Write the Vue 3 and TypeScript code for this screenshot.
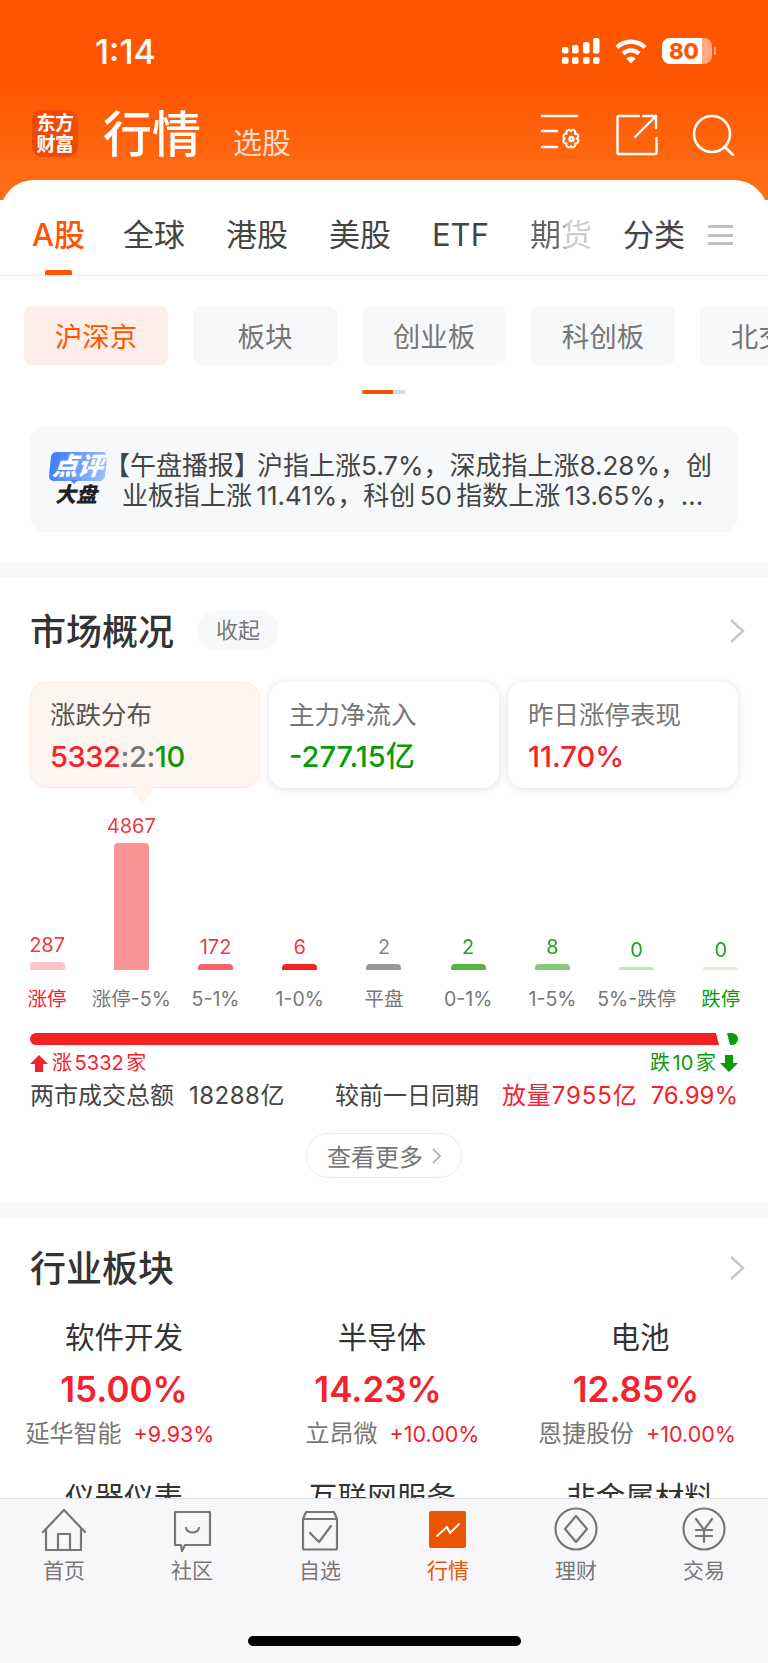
<script setup lang="ts">
// 行情页 market overview
const topTabs = ['全球', '港股', '美股', 'ETF']
const pills = ['沪深京', '板块', '创业板', '科创板', '北交所']
const bars = [
  { v: '287', h: 8, bar: '#ffc6c6', tone: 'red', label: '涨停', lt: 'red' },
  { v: '4867', h: 127, bar: '#f99495', tone: 'red', label: '涨停-5%', lt: '' },
  { v: '172', h: 6, bar: '#f96464', tone: 'red', label: '5-1%', lt: '' },
  { v: '6', h: 6, bar: '#f52222', tone: 'red', label: '1-0%', lt: '' },
  { v: '2', h: 6, bar: '#999999', tone: 'gray', label: '平盘', lt: '' },
  { v: '2', h: 6, bar: '#55b540', tone: 'green', label: '0-1%', lt: '' },
  { v: '8', h: 6, bar: '#85cb75', tone: 'green', label: '1-5%', lt: '' },
  { v: '0', h: 3, bar: '#c0e5b8', tone: 'green', label: '5%-跌停', lt: '' },
  { v: '0', h: 3, bar: '#dcf1d8', tone: 'green', label: '跌停', lt: 'green' },
]
const sectors = [
  { name: '软件开发', pct: '15.00%', stock: '延华智能', chg: '+9.93%' },
  { name: '半导体', pct: '14.23%', stock: '立昂微', chg: '+10.00%' },
  { name: '电池', pct: '12.85%', stock: '恩捷股份', chg: '+10.00%' },
  { name: '仪器仪表', pct: '', stock: '', chg: '' },
  { name: '互联网服务', pct: '', stock: '', chg: '' },
  { name: '非金属材料', pct: '', stock: '', chg: '' },
]
</script>

<template>
  <div class="page">
    <div class="scroll">
      <header class="head">
        <div class="status">
          <span class="time">1:14</span>
          <div class="status-icons">
            <svg width="38" height="26" viewBox="0 0 38 26" fill="#fff">
              <rect x="0" y="9" width="6.5" height="6.5" rx="2" />
              <rect x="10" y="7" width="6.5" height="8.5" rx="2" />
              <rect x="21" y="4" width="6.5" height="11.5" rx="2" />
              <rect x="31" y="0" width="6.5" height="15.5" rx="2" />
              <rect x="0" y="19" width="6.5" height="7" rx="2" />
              <rect x="10" y="19" width="6.5" height="7" rx="2" />
              <rect x="21" y="19" width="6.5" height="7" rx="2" />
              <rect x="31" y="19" width="6.5" height="7" rx="2" />
            </svg>
            <svg class="wifi" width="32" height="25" viewBox="0 0 32 25" fill="none" stroke="#fff" stroke-width="4.4">
              <path d="M2 8.5a20 20 0 0 1 28 0" />
              <path d="M8 14.6a11.6 11.6 0 0 1 16 0" />
              <path d="M16 24.5l-4.6-5a6.4 6.4 0 0 1 9.2 0z" fill="#fff" stroke="none" />
            </svg>
            <div class="battery"><span>80</span></div>
            <i class="nub"></i>
          </div>
        </div>
        <div class="bar">
          <div class="logo">东方<br />财富</div>
          <h1>行情</h1>
          <span class="sub">选股</span>
          <div class="bar-icons">
            <svg width="44" height="40" viewBox="0 0 44 40" fill="none" stroke="#fff" stroke-width="2.4" stroke-linecap="round" stroke-linejoin="round">
              <path d="M2 4h35M2 19h15M2 35h15" />
              <path d="M27 17.500c1.500-1 3 -.5 4 .8 1-1.300 2.500-1.800 4-.8 1.500 1 1.500 2.700 1 4 1.500-.3 3.200.4 3.700 2.200.5 1.800-.5 3-1.900 3.500 1.400.5 2.400 1.700 1.900 3.500-.5 1.800-2.200 2.500-3.700 2.200.5 1.300.5 3-1 4-1.500 1-3 .5-4-.8-1 1.300-2.500 1.800-4 .8-1.500-1-1.500-2.700-1-4-1.500.3-3.200-.4-3.700-2.200-.5-1.800.5-3 1.900-3.500-1.400-.5-2.400-1.700-1.900-3.500.5-1.800 2.200-2.500 3.700-2.200-.5-1.300-.5-3 1-4z" transform="translate(4.500 3.500) scale(.85)" />
              <circle cx="31.500" cy="27" r="2" />
            </svg>
            <svg class="ic-share" width="42" height="42" viewBox="0 0 42 42" fill="none" stroke="#fff" stroke-width="2.400" stroke-linecap="round" stroke-linejoin="round">
              <path d="M23 2H3a1.500 1.500 0 0 0-1.500 1.500v35A1.500 1.500 0 0 0 3 40h36a1.500 1.500 0 0 0 1.500-1.500V24" />
              <path d="M19 23L40 2M27 2h13v12" />
            </svg>
            <svg class="ic-search" width="44" height="42" viewBox="0 0 44 42" fill="none" stroke="#fff" stroke-width="2.600" stroke-linecap="round">
              <circle cx="20" cy="20" r="18" />
              <path d="M33 33l8 8" />
            </svg>
          </div>
        </div>
      </header>

      <main class="sheet">
        <nav class="tabs">
          <span class="tab active">A股</span>
          <span v-for="t in topTabs" :key="t" class="tab">{{ t }}</span>
          <span class="tab fade">期货</span>
          <span class="tab tab-last">分类</span>
          <i class="menu"></i>
        </nav>

        <div class="pills">
          <span v-for="(p, i) in pills" :key="p" class="pill" :class="{ on: i === 0 }">{{ p }}</span>
        </div>
        <div class="scrollbar"><i></i></div>

        <div class="notice">
          <div class="notice-logo">
            <span class="dp">点评</span>
            <span class="dp-tail"></span>
            <span class="dk">大盘</span>
          </div>
          <div class="notice-text">
            <div class="first">【午盘播报<span class="tight">】</span>沪指上涨5.7%，深成指上涨8.28%，创</div>
            <div>业板指上涨 11.41%，科创 50 指数上涨 13.65%，...</div>
          </div>
        </div>

        <div class="band"></div>

        <section class="market">
          <div class="sec-head">
            <h2>市场概况</h2>
            <span class="fold">收起</span>
            <svg class="chev" width="16" height="24" viewBox="0 0 16 24" fill="none" stroke="#c8c8c8" stroke-width="2.400"><path d="M2 1l12 11L2 23" /></svg>
          </div>

          <div class="cards">
            <div class="card sel">
              <div class="c-label">涨跌分布</div>
              <div class="c-val ratio-val"><em class="red">5332</em><em class="gray">:2:</em><em class="green">10</em></div>
            </div>
            <div class="card">
              <div class="c-label">主力净流入</div>
              <div class="c-val green">-277.15亿</div>
            </div>
            <div class="card">
              <div class="c-label">昨日涨停表现</div>
              <div class="c-val red">11.70%</div>
            </div>
          </div>

          <div class="chart">
            <div v-for="b in bars" :key="b.label" class="col">
              <span class="col-v" :class="b.tone">{{ b.v }}</span>
              <i class="col-b" :style="{ height: b.h + 'px', background: b.bar }"></i>
              <span class="col-l" :class="b.lt">{{ b.label }}</span>
            </div>
          </div>

          <div class="ratio">
            <i class="r-up"></i>
            <i class="r-down"></i>
          </div>
          <div class="legend">
            <span class="red">
              <svg width="18" height="17" viewBox="0 0 18 17" fill="#f5222d"><path d="M9 0l9 9h-5v8H5V9H0z" /></svg>
              涨 5332 家
            </span>
            <span class="green">
              跌 10 家
              <svg width="18" height="17" viewBox="0 0 18 17" fill="#0a9a0a"><path d="M9 17L0 8h5V0h8v8h5z" /></svg>
            </span>
          </div>
          <div class="total">
            <span class="t-a">两市成交总额</span>
            <span class="t-b">18288亿</span>
            <span class="t-c">较前一日同期</span>
            <span class="red t-d">放量7955亿</span>
            <span class="red t-e">76.99%</span>
          </div>
          <div class="more-wrap">
            <div class="more">
              查看更多
              <svg width="9" height="16" viewBox="0 0 9 16" fill="none" stroke="#aaa" stroke-width="1.600"><path d="M1 1l7 7-7 7" /></svg>
            </div>
          </div>
        </section>

        <div class="band"></div>

        <section class="sectors">
          <div class="sec-head">
            <h2>行业板块</h2>
            <svg class="chev" width="16" height="24" viewBox="0 0 16 24" fill="none" stroke="#c8c8c8" stroke-width="2.400"><path d="M2 1l12 11L2 23" /></svg>
          </div>
          <div class="grid">
            <div v-for="s in sectors" :key="s.name" class="cell">
              <div class="s-name">{{ s.name }}</div>
              <div class="s-pct">{{ s.pct }}</div>
              <div class="s-sub"><span>{{ s.stock }}</span><em>{{ s.chg }}</em></div>
            </div>
          </div>
        </section>
      </main>
    </div>

    <footer class="nav">
      <div class="nav-item">
        <svg width="48" height="48" viewBox="0 0 48 48" fill="none" stroke="#777" stroke-width="2.200" stroke-linejoin="round" stroke-linecap="round">
          <path d="M3 27L24 5l21 22" />
          <path d="M6 24v21h35V24" />
          <path d="M18 45V29h12v16" />
        </svg>
        <span>首页</span>
      </div>
      <div class="nav-item">
        <svg width="48" height="48" viewBox="0 0 48 48" fill="none" stroke="#777" stroke-width="2.200" stroke-linejoin="round" stroke-linecap="round">
          <path d="M7 7h35v33H17l-3 6-1-6H7z" />
          <path d="M18 23c2 6 11 6 13 0" />
        </svg>
        <span>社区</span>
      </div>
      <div class="nav-item">
        <svg width="48" height="48" viewBox="0 0 48 48" fill="none" stroke="#777" stroke-width="2.200" stroke-linejoin="round" stroke-linecap="round">
          <path d="M10 7h28l3 7v29a1.500 1.500 0 0 1-1.500 1.500h-31A1.500 1.500 0 0 1 7 43V14z" />
          <path d="M7 14h34" />
          <path d="M14 28l9 9 12-16" />
        </svg>
        <span>自选</span>
      </div>
      <div class="nav-item on">
        <svg width="48" height="48" viewBox="0 0 48 48" fill="none">
          <rect x="5" y="6" width="37" height="37" rx="2" fill="#ea5504" />
          <path d="M13 31l10-9 3 6 9-9" stroke="#fff" stroke-width="2" stroke-linecap="round" stroke-linejoin="round" />
        </svg>
        <span>行情</span>
      </div>
      <div class="nav-item">
        <svg width="48" height="48" viewBox="0 0 48 48" fill="none" stroke="#777" stroke-width="2.200" stroke-linejoin="round">
          <circle cx="24" cy="24" r="20.500" />
          <path d="M24 11l11 13-11 13-11-13z" />
        </svg>
        <span>理财</span>
      </div>
      <div class="nav-item">
        <svg width="48" height="48" viewBox="0 0 48 48" fill="none" stroke="#777" stroke-width="2.200" stroke-linecap="round">
          <circle cx="24" cy="24" r="20.500" />
          <path d="M16 14l8 11 8-11M16 25h16M16 31h16M24 25v12" />
        </svg>
        <span>交易</span>
      </div>
      <i class="home-bar"></i>
    </footer>
  </div>
</template>

<style scoped>
.page {
  position: relative;
  width: 768px;
  height: 1663px;
  display: flex;
  flex-direction: column;
  overflow: hidden;
  background: #fff;
  color: #333;
  font-family: "Inter", "Noto Sans CJK SC", sans-serif;
}
.scroll {
  flex: 1;
  min-height: 0;
  overflow: hidden;
  background: linear-gradient(#ff5500 0, #ff5500 80px, #ff7118 200px);
  background-size: 100% 200px;
  background-repeat: no-repeat;
}
em {
  font-style: normal;
}
.red {
  color: #f5222d;
}
.green {
  color: #0a9a0a;
}
.gray {
  color: #777;
}

.head {
  height: 180px;
  color: #fff;
}
.status {
  height: 100px;
  display: flex;
  align-items: center;
  padding-top: 2px;
  box-sizing: border-box;
}
.time {
  margin-left: 95px;
  font-size: 34px;
  font-weight: 500;
}
.status-icons {
  margin-left: auto;
  margin-right: 52px;
  display: flex;
  align-items: center;
}
.wifi {
  margin-left: 15px;
}
.battery {
  margin-left: 15px;
  width: 50px;
  height: 26px;
  border-radius: 8px;
  background: linear-gradient(90deg, #fff 40px, #ffaa80 40px);
  color: #ff5500;
  font-size: 22px;
  line-height: 26px;
  font-weight: 800;
  padding-left: 7px;
  box-sizing: border-box;
}
.nub {
  width: 2.500px;
  height: 8px;
  margin-left: 1.500px;
  border-radius: 0 2px 2px 0;
  background: #ffaa80;
}
.bar {
  height: 80px;
  display: flex;
  align-items: flex-start;
  padding-left: 32px;
}
.logo {
  width: 46px;
  height: 47px;
  margin-top: 10px;
  border-radius: 10px;
  background: #ec4b08;
  font-size: 19px;
  line-height: 21px;
  font-weight: 700;
  text-align: center;
  padding-top: 3px;
  box-sizing: border-box;
  letter-spacing: -0.500px;
}
.bar h1 {
  margin: 0 0 0 25px;
  font-size: 49px;
  line-height: 70px;
  font-weight: 500;
}
.sub {
  margin: 24px 0 0 32px;
  font-size: 29px;
  line-height: 40px;
  color: rgba(255, 255, 255, 0.8);
}
.bar-icons {
  margin-left: auto;
  margin-right: 32px;
  margin-top: 12px;
  display: flex;
  align-items: flex-start;
}
.ic-share {
  margin-left: 32px;
  margin-top: 2px;
}
.ic-search {
  margin-left: 34px;
  margin-top: 2px;
}

.sheet {
  background: #fff;
  border-radius: 34px 34px 0 0;
}
.tabs {
  height: 96px;
  box-sizing: border-box;
  border-bottom: 1px solid #eeeeee;
  display: flex;
  align-items: flex-start;
  padding: 33px 0 0 32px;
  gap: 41px;
  font-size: 31px;
  line-height: 44px;
  color: #444;
}
.tab {
  position: relative;
  white-space: nowrap;
}
.tab.active {
  color: #ff5500;
  font-weight: 500;
  margin-right: -3px;
}
.tab.active::after {
  content: "";
  position: absolute;
  left: 13px;
  top: 57px;
  width: 27px;
  height: 5px;
  border-radius: 2px 2px 0 0;
  background: #ff5500;
}
.tab.fade {
  background: linear-gradient(90deg, #666 0, #666 50%, #ccc 60%, #ccc 100%);
  -webkit-background-clip: text;
  background-clip: text;
  color: transparent;
}
.tab-last {
  margin-left: -10px;
}
.menu {
  width: 25px;
  height: 20px;
  margin: 12px 0 0 -18px;
  border-top: 3px solid #c0c0c0;
  border-bottom: 3px solid #c0c0c0;
  box-sizing: border-box;
  position: relative;
}
.menu::after {
  content: "";
  position: absolute;
  left: 0;
  right: 0;
  top: 5.500px;
  height: 3px;
  background: #c0c0c0;
}
.pills {
  display: flex;
  gap: 25px;
  padding: 30px 0 0 24px;
  overflow: hidden;
}
.pill {
  flex: 0 0 144px;
  height: 59px;
  border-radius: 8px;
  background: #f7f8fa;
  color: #777;
  font-size: 27.500px;
  line-height: 62px;
  text-align: center;
}
.pill.on {
  background: #ffeee8;
  color: #ff5500;
}
.scrollbar {
  width: 44px;
  height: 4px;
  margin: 25px auto 0;
  border-radius: 2px;
  background: #d8dbe0;
  overflow: hidden;
}
.scrollbar i {
  display: block;
  width: 31px;
  height: 4px;
  background: #ea5504;
}
.notice {
  margin: 32px 30px 30px;
  height: 106px;
  border-radius: 16px;
  background: #f7f8fa;
  display: flex;
  align-items: center;
}
.notice-logo {
  position: relative;
  flex: 0 0 56px;
  margin-left: 20px;
  text-align: center;
  font-style: italic;
  font-weight: 900;
  font-size: 25px;
}
.dp {
  display: block;
  height: 29px;
  line-height: 29px;
  border-radius: 5px;
  background: linear-gradient(100deg, #3b7bff, #9dc0ff);
  color: #fff;
  transform: skewX(-6deg);
}
.dp-tail {
  position: absolute;
  left: 20px;
  top: 28px;
  border: 4px solid transparent;
  border-top-color: #4a85ff;
}
.dk {
  display: block;
  margin-top: 2px;
  margin-right: 4px;
  font-size: 21px;
  line-height: 24px;
  color: #222;
}
.notice-text {
  margin-left: 16px;
  padding-top: 3px;
  font-size: 26px;
  line-height: 30px;
  color: #444;
  white-space: nowrap;
  word-spacing: -3px;
}
.first {
  margin-left: -18px;
}
.tight {
  margin-right: -3px;
}
.band {
  height: 15px;
  background: #f7f8fa;
}
.market {
  padding: 34px 30px 25px;
}
.sec-head {
  display: flex;
  align-items: center;
  height: 39px;
}
.sec-head h2 {
  margin: 0 0 4px;
  font-size: 36px;
  font-weight: 500;
  color: #333;
}
.fold {
  margin-left: 23px;
  width: 82px;
  height: 39px;
  border-radius: 20px;
  background: #f7f8fa;
  color: #777;
  font-size: 22px;
  line-height: 39px;
  text-align: center;
}
.chev {
  margin-left: auto;
  margin-right: -7px;
}
.cards {
  margin-top: 32px;
  display: flex;
  gap: 9px;
}
.card {
  flex: 1;
  height: 106px;
  box-sizing: border-box;
  padding: 16px 20px 0;
  border-radius: 16px;
  background: #fff;
  box-shadow: 0 1px 8px rgba(0, 0, 0, 0.13);
  position: relative;
}
.card.sel {
  background: #fff5f0;
  border: 1px solid #ffe8de;
  box-shadow: none;
  padding: 15px 19px 0;
}
.card.sel::after {
  content: "";
  position: absolute;
  left: 103px;
  bottom: -12px;
  width: 16px;
  height: 16px;
  background: #fff5f0;
  transform: rotate(45deg) skew(10deg, 10deg);
  border-radius: 0 0 3px 0;
  border-right: 1px solid #ffe8de;
  border-bottom: 1px solid #ffe8de;
}
.c-label {
  font-size: 25.500px;
  line-height: 34px;
  color: #777;
}
.card.sel .c-label {
  color: #555;
}
.c-val {
  margin-top: 6px;
  font-size: 29px;
  line-height: 38px;
  font-weight: 500;
}
.ratio-val {
  letter-spacing: -0.400px;
}
.chart {
  margin: 25px 0 0 -25px;
  width: 758px;
  display: grid;
  grid-template-columns: repeat(9, 1fr);
  align-items: end;
}
.col {
  display: flex;
  flex-direction: column;
  align-items: center;
  white-space: nowrap;
}
.col-v {
  font-size: 20px;
  line-height: 26px;
  margin-bottom: 4px;
  opacity: 0.9;
}
.col-b {
  width: 35px;
  border-radius: 4px 4px 0 0;
}
.col-l {
  margin-top: 15px;
  font-size: 19.500px;
  line-height: 28px;
  color: #777;
}
.col-l.red {
  color: #f5222d;
}
.col-l.green {
  color: #0a9a0a;
}
.ratio {
  margin-top: 20px;
  height: 12px;
  display: flex;
  gap: 2px;
}
.r-up {
  flex: 1;
  background: #f52222;
  border-radius: 6px 0 0 6px;
  clip-path: polygon(0 0, calc(100% - 3px) 0, 100% 100%, 0 100%);
  margin-right: 6px;
}
.r-down {
  width: 11px;
  background: #0a9a0a;
  border-radius: 0 6px 6px 0;
  clip-path: polygon(0 0, 100% 0, 100% 100%, 3px 100%);
}
.legend {
  margin-top: 5px;
  display: flex;
  justify-content: space-between;
  font-size: 20px;
  line-height: 26px;
  word-spacing: -3px;
}
.legend span {
  display: flex;
  align-items: center;
  gap: 4px;
}
.total {
  margin-top: 5px;
  display: flex;
  font-size: 24px;
  line-height: 30px;
  color: #444;
  white-space: nowrap;
}
.t-b {
  margin-left: 15px;
  letter-spacing: 0.500px;
}
.t-c {
  margin-left: 50px;
}
.t-d {
  margin-left: 23px;
  letter-spacing: 0.900px;
}
.t-e {
  margin-left: auto;
}
.more-wrap {
  margin-top: 22px;
  display: flex;
  justify-content: center;
}
.more {
  width: 156px;
  height: 45px;
  box-sizing: border-box;
  border: 1.500px solid #ececec;
  border-radius: 23px;
  display: flex;
  align-items: center;
  justify-content: center;
  gap: 9px;
  font-size: 24px;
  color: #777;
}
.sectors {
  padding: 30px 30px 0;
}
.grid {
  margin: 32px 0 0 -35px;
  display: grid;
  grid-template-columns: repeat(3, 258px);
  row-gap: 30px;
}
.cell {
  text-align: center;
  white-space: nowrap;
}
.s-name {
  font-size: 29.500px;
  line-height: 36px;
  color: #333;
}
.s-pct {
  margin-top: 12px;
  height: 44px;
  font-size: 35px;
  line-height: 44px;
  font-weight: 600;
  color: #f5222d;
}
.cell:nth-child(2) .s-pct,
.cell:nth-child(3) .s-pct {
  padding-right: 8px;
}
.s-sub {
  margin-top: 8px;
  height: 30px;
  line-height: 30px;
  font-size: 24px;
  color: #777;
}
.cell:nth-child(1) .s-sub {
  padding-right: 8px;
}
.cell:nth-child(2) .s-sub {
  padding-left: 21px;
}
.cell:nth-child(3) .s-sub {
  padding-right: 6px;
}
.s-sub em {
  margin-left: 12px;
  font-size: 21.500px;
  color: #f5222d;
}

.nav {
  position: relative;
  flex: 0 0 165px;
  box-sizing: border-box;
  border-top: 1px solid #dfe0e5;
  background: #f7f7fa;
  display: grid;
  grid-template-columns: repeat(6, 128px);
  padding-top: 6px;
}
.nav-item {
  display: flex;
  flex-direction: column;
  align-items: center;
  color: #777;
  font-size: 21px;
  line-height: 30px;
}
.nav-item span {
  margin-top: 3px;
}
.nav-item.on {
  color: #ea5504;
}
.home-bar {
  position: absolute;
  left: 248px;
  bottom: 17px;
  width: 273px;
  height: 10px;
  border-radius: 5px;
  background: #000;
}
</style>
